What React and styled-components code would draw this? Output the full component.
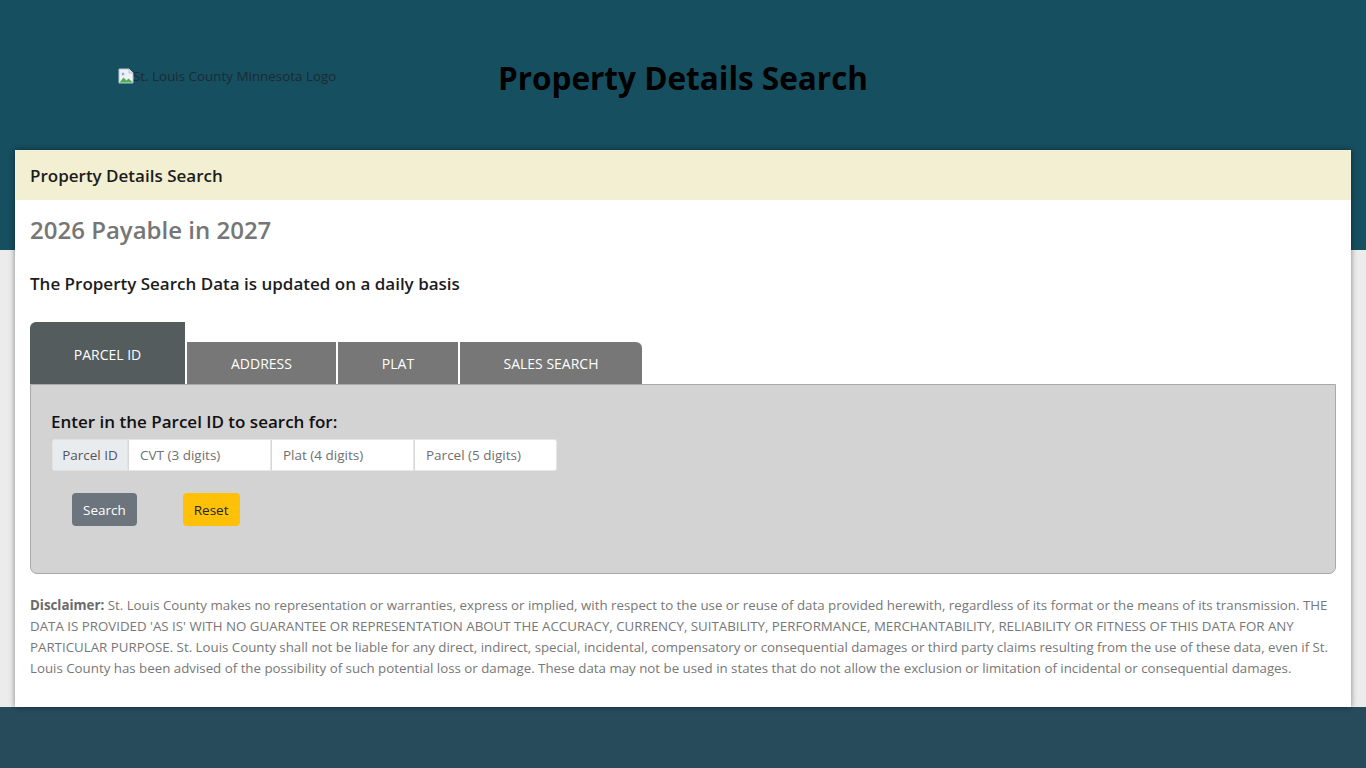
import React from "react";
import styled, { createGlobalStyle } from "styled-components";

const GlobalStyle = createGlobalStyle`
  body {
    margin: 0;
    background: #ececec;
    font-family: "Open Sans", "Noto Sans", sans-serif;
    color: #212529;
  }
  * { box-sizing: border-box; }
`;

const tabs = [
  { label: "PARCEL ID", width: 155 },
  { label: "ADDRESS", width: 149 },
  { label: "PLAT", width: 120 },
  { label: "SALES SEARCH", width: 182 },
];

const fields = ["CVT (3 digits)", "Plat (4 digits)", "Parcel (5 digits)"];

const BrokenImage = () => (
  <svg width="16" height="16" viewBox="0 0 16 16">
    <path d="M1 1h10l4 4v10H1z" fill="#eef2f7" stroke="#b7c2cf" />
    <path d="M11 1v4h4" fill="#dfe6ee" stroke="#b7c2cf" />
    <path d="M1.5 14.5l4-5 3 3 2-2 4.5 4z" fill="#4caf50" />
    <circle cx="5" cy="6" r="1.5" fill="#8fb4d9" />
  </svg>
);

export default function App() {
  return (
    <>
      <GlobalStyle />
      <Banner>
        <BannerRow>
          <Logo>
            <BrokenImage />
            <LogoAlt>St. Louis County Minnesota Logo</LogoAlt>
          </Logo>
          <SiteTitle>Property Details Search</SiteTitle>
          <span />
        </BannerRow>
      </Banner>
      <Card>
        <CardHeader>Property Details Search</CardHeader>
        <CardBody>
          <YearTitle>2026 Payable in 2027</YearTitle>
          <Notice>The Property Search Data is updated on a daily basis</Notice>
          <TabBar>
            {tabs.map((t, i) => (
              <Tab
                key={t.label}
                $active={i === 0}
                $last={i === tabs.length - 1}
                style={{ width: t.width }}
              >
                {t.label}
              </Tab>
            ))}
          </TabBar>
          <Panel>
            <PanelTitle>Enter in the Parcel ID to search for:</PanelTitle>
            <InputGroup>
              <Addon>Parcel ID</Addon>
              {fields.map((f, i) => (
                <Field key={f} placeholder={f} $last={i === fields.length - 1} />
              ))}
            </InputGroup>
            <Buttons>
              <Button $variant="secondary">Search</Button>
              <Button $variant="warning">Reset</Button>
            </Buttons>
          </Panel>
          <Disclaimer>
            <strong>Disclaimer:</strong> St. Louis County makes no representation or
            warranties, express or implied, with respect to the use or reuse of data
            provided herewith, regardless of its format or the means of its
            transmission. THE DATA IS PROVIDED 'AS IS' WITH NO GUARANTEE OR
            REPRESENTATION ABOUT THE ACCURACY, CURRENCY, SUITABILITY, PERFORMANCE,
            MERCHANTABILITY, RELIABILITY OR FITNESS OF THIS DATA FOR ANY PARTICULAR
            PURPOSE. St. Louis County shall not be liable for any direct, indirect,
            special, incidental, compensatory or consequential damages or third party
            claims resulting from the use of these data, even if St. Louis County has
            been advised of the possibility of such potential loss or damage. These
            data may not be used in states that do not allow the exclusion or
            limitation of incidental or consequential damages.
          </Disclaimer>
        </CardBody>
      </Card>
      <Footer />
    </>
  );
}

const Banner = styled.header`
  background: #164f60;
  height: 250px;
`;

const BannerRow = styled.div`
  display: grid;
  grid-template-columns: 1fr auto 1fr;
  align-items: center;
  height: 150px;
  padding-top: 4px;
`;

const Logo = styled.div`
  display: flex;
  align-items: center;
  padding-left: 118px;
  margin-top: -2px;
`;

const LogoAlt = styled.span`
  font-size: 13.4px;
  color: #1d2b33;
  margin-left: -1px;
`;

const SiteTitle = styled.h1`
  margin: 0;
  font-size: 31.5px;
  font-weight: 700;
  color: #000;
`;

const Card = styled.main`
  margin: -100px 15px 0;
  background: #fff;
  box-shadow: 0 0 6px rgba(0, 0, 0, 0.45);
  position: relative;
`;

const CardHeader = styled.div`
  height: 50px;
  display: flex;
  align-items: center;
  padding: 0 15px;
  background: #f2efd2;
  font-size: 17px;
  font-weight: 600;
  color: #1c1c1c;
`;

const CardBody = styled.div`
  padding: 15px 15px 28px;
`;

const YearTitle = styled.h2`
  margin: 0;
  font-size: 24px;
  line-height: 30px;
  font-weight: 600;
  color: #767676;
`;

const Notice = styled.h3`
  margin: 28px 0 0;
  font-size: 17px;
  line-height: 22px;
  font-weight: 600;
  color: #1c1c1c;
`;

const TabBar = styled.div`
  display: flex;
  align-items: flex-end;
  gap: 2px;
  margin-top: 27px;
`;

const Tab = styled.div`
  height: ${(p) => (p.$active ? "62px" : "42px")};
  display: flex;
  justify-content: center;
  align-items: center;
  padding-top: ${(p) => (p.$active ? "2px" : "0")};
  background: ${(p) => (p.$active ? "#545c5e" : "#777777")};
  color: #fff;
  font-size: 14px;
  border-radius: ${(p) => (p.$active ? "6px 0 0 0" : p.$last ? "0 6px 0 0" : "0")};
`;

const Panel = styled.section`
  background: #d3d3d3;
  border: 1px solid #a8a8a8;
  border-radius: 0 0 7px 7px;
  padding: 26px 20px 47px;
`;

const PanelTitle = styled.h4`
  margin: 0 0 6px;
  font-size: 17px;
  line-height: 22px;
  font-weight: 600;
  color: #111;
`;

const InputGroup = styled.div`
  display: flex;
  width: 505px;
  height: 32px;
  margin-left: 1px;
`;

const Addon = styled.span`
  display: flex;
  align-items: center;
  justify-content: center;
  flex: 0 0 76px;
  white-space: nowrap;
  background: #e9ecef;
  border: 1px solid #e3e3e3;
  border-radius: 3px 0 0 3px;
  font-size: 13.5px;
  color: #555;
`;

const Field = styled.input`
  width: 143px;
  height: 32px;
  border: 1px solid #e6e6e6;
  border-left: 1px solid #d8d8d8;
  border-radius: ${(p) => (p.$last ? "0 3px 3px 0" : "0")};
  padding: 0 11px;
  font-family: inherit;
  font-size: 13.5px;
  background: #fff;
  &::placeholder { color: #6f6f6f; }
`;

const Buttons = styled.div`
  display: flex;
  gap: 46px;
  margin: 22px 0 0 21px;
`;

const Button = styled.button`
  height: 33px;
  padding: 0 11px;
  border: none;
  border-radius: 4px;
  font-family: inherit;
  font-size: 13.5px;
  background: ${(p) => (p.$variant === "warning" ? "#ffc107" : "#6c757d")};
  color: ${(p) => (p.$variant === "warning" ? "#212529" : "#fff")};
`;

const Disclaimer = styled.p`
  margin: 21px 0 0;
  font-size: 13.3px;
  line-height: 21px;
  color: #777;
  strong { color: #6a6a6a; }
`;

const Footer = styled.footer`
  background: #284b5c;
  height: 61px;
`;
